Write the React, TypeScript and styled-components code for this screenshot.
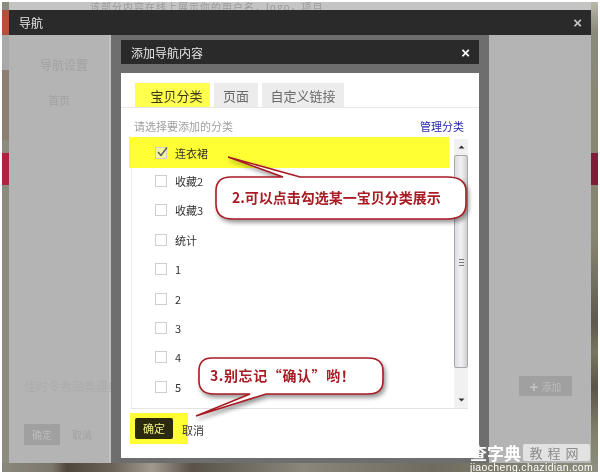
import React from "react";
import styled, { createGlobalStyle } from "styled-components";

const Global = createGlobalStyle`
  html, body { margin: 0; padding: 0; background: #fff; }
  body { font-family: "Noto Sans CJK SC", "Liberation Sans", sans-serif; }
`;

const Page = styled.div`
  width: 600px;
  height: 475px;
  padding: 2px 2px 3px 2px;
  box-sizing: border-box;
  overflow: hidden;
  background: #fff;
`;
const Backdrop = styled.div`
  position: relative;
  height: 100%;
  box-sizing: border-box;
  display: flex;
  flex-direction: column;
  padding: 8px 7px 9px 7px;
  overflow: hidden;
  filter: blur(0.35px);
  background: #c4c4c4;
`;
const BottomStrip = styled.div`
  position: absolute;
  left: 0;
  right: 0;
  bottom: 0;
  height: 9px;
  background: linear-gradient(
    to right,
    #8a877c 0,
    #7c776c 50px,
    #4f473c 65px,
    #6a6257 110px,
    #a09a8e 150px,
    #58524a 190px,
    #8a867a 300px,
    #6f6b5e 430px,
    #8f8f80 100%
  );
`;
const SideStrip = styled.div<{ $right?: boolean }>`
  position: absolute;
  top: 0;
  bottom: 0;
  width: 7px;
  ${(p) => (p.$right ? "right: 0;" : "left: 0;")}
  background: ${(p) =>
    p.$right
      ? "linear-gradient(to bottom, #b9b8aa 0, #8a8a78 30px, #85846f 240px, #5e5a4c 320px, #77765f 350px, #5a5648 385px, #80806a 430px, #8f8f7f 100%)"
      : "#8c8b80"};
`;
const TopNote = styled.div`
  position: absolute;
  top: 0;
  left: 88px;
  font-size: 10px;
  line-height: 9px;
  letter-spacing: 1px;
  color: #9a9a9a;
  white-space: nowrap;
`;
const SideBlock = styled.div<{ $top: number; $h: number; $right?: boolean; $color: string }>`
  position: absolute;
  top: ${(p) => p.$top}px;
  height: ${(p) => p.$h}px;
  width: 7px;
  ${(p) => (p.$right ? "right: 0;" : "left: 0;")}
  background: ${(p) => p.$color};
`;
const Dialog = styled.div`
  position: relative;
  flex: 1;
  display: flex;
  flex-direction: column;
  background: #b4b4b4;
`;
const TitleBar = styled.div<{ $h: number }>`
  height: ${(p) => p.$h}px;
  flex: none;
  display: flex;
  align-items: center;
  justify-content: space-between;
  padding: 0 9px 0 10px;
  background: #2a2a2a;
  color: #e6e6e6;
  font-size: 12px;
`;
const Close = styled.span<{ $bright?: boolean }>`
  color: ${(p) => (p.$bright ? "#fff" : "#c4c4c4")};
  font-family: "Liberation Sans", sans-serif;
  font-size: 15px;
  font-weight: 700;
  line-height: 1;
`;
const DialogBody = styled.div`
  flex: 1;
  display: flex;
  justify-content: space-between;
`;
const FadedLeft = styled.div`
  width: 102px;
  border-right: 2px solid #c0c0c0;
  display: flex;
  flex-direction: column;
  color: #a2a2a2;
  font-size: 12px;
  padding: 22px 0 18px 15px;
  box-sizing: border-box;
`;
const NavHeading = styled.div`
  font-size: 12px;
  line-height: 16px;
  padding-left: 16px;
`;
const NavItem = styled.div`
  font-size: 11px;
  line-height: 14px;
  margin-top: 20px;
  padding-left: 24px;
`;
const FadedHint = styled.div`
  margin-top: auto;
  font-size: 12px;
  line-height: 14px;
  white-space: nowrap;
  color: #acacac;
`;
const FadedActions = styled.div`
  margin-top: 31px;
  display: flex;
  align-items: center;
  gap: 12px;
  font-size: 10px;
`;
const FadedOk = styled.div`
  width: 36px;
  height: 21px;
  background: #a0a0a0;
  color: #bcbcbc;
  text-align: center;
  line-height: 21px;
`;
const FadedRight = styled.div`
  width: 102px;
  display: flex;
  flex-direction: column;
  align-items: flex-end;
  padding: 341px 19px 0 0;
  box-sizing: border-box;
`;
const AddButton = styled.div`
  width: 53px;
  height: 20px;
  background: #a0a0a0;
  color: #bdbdbd;
  font-size: 10px;
  display: flex;
  align-items: center;
  justify-content: center;
  gap: 3px;
  b {
    font-family: "Liberation Sans", sans-serif;
    font-size: 15px;
    color: #c4c4c4;
  }
`;
const ModalFrame = styled.div`
  position: absolute;
  left: 102px;
  top: 25px;
  width: 378px;
  height: 428px;
  box-sizing: border-box;
  padding: 5px 10px;
  background: #6e6e6e;
  display: flex;
  flex-direction: column;
`;
const ModalGap = styled.div`
  height: 9px;
  flex: none;
`;
const ModalBody = styled.div`
  position: relative;
  flex: 1;
  background: #fff;
  display: flex;
  flex-direction: column;
`;
const TabRow = styled.div`
  height: 24px;
  margin-top: 10px;
  display: flex;
  gap: 4px;
  padding-left: 14px;
  border-bottom: 1px solid #e8e8e8;
`;
const Tab = styled.div<{ $active?: boolean; $w: number }>`
  width: ${(p) => p.$w}px;
  padding-left: ${(p) => (p.$active ? 8 : 0)}px;
  box-sizing: border-box;
  text-align: center;
  font-size: 13px;
  line-height: 25px;
  color: ${(p) => (p.$active ? "#3a3a1a" : "#6a6a6a")};
  background: ${(p) => (p.$active ? "#ffff4d" : "#ececec")};
`;
const HintRow = styled.div`
  display: flex;
  justify-content: space-between;
  align-items: center;
  height: 30px;
  box-sizing: border-box;
  padding: 5px 15px 0 13px;
  font-size: 11px;
  color: #a0a0a0;
`;
const ManageLink = styled.a`
  color: #1f1fa8;
  font-size: 11px;
`;
const ListBox = styled.div`
  margin: 1px 11px 0 10px;
  height: 269px;
  display: flex;
  border-left: 1px solid #ececec;
  border-bottom: 1px solid #e4e4e4;
`;
const Rows = styled.div`
  flex: 1;
  margin: -2px 0 0 -3px;
  display: flex;
  flex-direction: column;
  min-width: 0;
`;
const Row = styled.div<{ $on?: boolean }>`
  height: ${(p) => (p.$on ? 31 : 29.4)}px;
  margin-bottom: ${(p) => (p.$on ? -1.6 : 0)}px;
  flex: none;
  display: flex;
  align-items: center;
  padding-left: 26px;
  margin-right: 5px;
  gap: 8px;
  font-size: 11px;
  color: #333;
  background: ${(p) => (p.$on ? "#ffff33" : "transparent")};
`;
const Check = styled.span<{ $on?: boolean }>`
  width: 10px;
  height: 10px;
  border: 1px solid #cfcfcf;
  background: ${(p) => (p.$on ? "#f4f4a0" : "#fff")};
  position: relative;
  flex: none;
  svg {
    position: absolute;
    left: 0;
    top: -3px;
  }
`;
const Scroll = styled.div`
  width: 14px;
  flex: none;
  display: flex;
  flex-direction: column;
  background: #f0f0f0;
`;
const ScrollBtn = styled.div<{ $grow?: boolean }>`
  height: 16px;
  ${(p) => (p.$grow ? "flex: 1;" : "")}
  display: flex;
  justify-content: center;
  align-items: ${(p) => (p.$grow ? "flex-end" : "center")};
  padding-bottom: ${(p) => (p.$grow ? "6px" : "0")};
  box-sizing: border-box;
  background: #f1f1f1;
`;
const Thumb = styled.div`
  height: 213px;
  flex: none;
  box-sizing: border-box;
  border: 1px solid #a8a8a8;
  border-radius: 2px;
  background: linear-gradient(to right, #dcdce4, #f2f2f2 50%, #cfcfcf);
  display: flex;
  align-items: center;
  justify-content: center;
  padding-top: 2px;
`;
const Grip = styled.div`
  width: 5px;
  height: 7px;
  background: repeating-linear-gradient(to bottom, #777 0, #777 1px, transparent 1px, transparent 3px);
`;
const Actions = styled.div`
  display: flex;
  align-items: center;
  height: 31px;
  margin-top: 4px;
  margin-left: 9px;
  font-size: 11px;
  color: #333;
`;
const OkMark = styled.div`
  width: 58px;
  height: 31px;
  background: #ffff33;
  display: flex;
  align-items: center;
  padding-left: 5px;
  box-sizing: border-box;
  margin-right: -6px;
`;
const OkButton = styled.div`
  width: 38px;
  height: 21px;
  border-radius: 2px;
  background: #2c2a0e;
  color: #f0f08a;
  text-align: center;
  line-height: 21px;
  font-size: 11px;
`;
const Cancel = styled.span`
  padding-top: 3px;
  position: relative;
`;
const Callout = styled.div<{ $x: number; $y: number; $w: number; $h: number }>`
  position: absolute;
  left: ${(p) => p.$x}px;
  top: ${(p) => p.$y}px;
  width: ${(p) => p.$w}px;
  height: ${(p) => p.$h}px;
  svg {
    position: absolute;
    left: 0;
    top: 0;
    overflow: visible;
  }
`;
const CalloutText = styled.div<{ $x: number; $y: number; $size: number; $track?: number }>`
  position: absolute;
  left: ${(p) => p.$x}px;
  top: ${(p) => p.$y}px;
  font-size: ${(p) => p.$size}px;
  letter-spacing: ${(p) => p.$track ?? 0}px;
  line-height: 20px;
  font-weight: 700;
  color: #a81c24;
  white-space: nowrap;
`;
const Watermark = styled.div`
  position: absolute;
  right: 8px;
  bottom: 0;
  width: 120px;
  display: flex;
  flex-direction: column;
  color: #fff;
`;
const WmTop = styled.div`
  display: flex;
  align-items: center;
  gap: 2px;
  height: 17px;
  margin-bottom: 1px;
`;
const WmBrand = styled.div`
  font-size: 17px;
  font-weight: 700;
  line-height: 17px;
  white-space: nowrap;
`;
const WmChip = styled.div`
  flex: 1;
  height: 17px;
  background: #e2e2e2;
  border-radius: 2px;
  color: #8a8a8a;
  font-size: 13px;
  line-height: 17px;
  text-align: center;
  letter-spacing: 5px;
  white-space: nowrap;
`;
const WmUrl = styled.div`
  font-family: "Liberation Sans", sans-serif;
  font-size: 10.5px;
  line-height: 10px;
  letter-spacing: 0.35px;
  white-space: nowrap;
`;

const Arrow = ({ up }: { up?: boolean }) => (
  <svg width="7" height="4" viewBox="0 0 7 4">
    <path d={up ? "M3.5 0.5 L6.5 3.5 H0.5 Z" : "M0.5 0.5 H6.5 L3.5 3.5 Z"} fill="#333" />
  </svg>
);

const categories = ["连衣裙", "收藏2", "收藏3", "统计", "1", "2", "3", "4", "5"];

function App() {
  return (
    <Page>
      <Global />
      <Backdrop>
        <SideStrip />
        <SideStrip $right />
        <BottomStrip />
        <TopNote>该部分内容在线上展示你的用户名，logo，项目</TopNote>
        <SideBlock $top={8} $h={25} $color="#b5503a" />
        <SideBlock $top={33} $h={35} $color="#a9a9a9" />
        <SideBlock $top={68} $h={70} $color="#8d7d72" />
        <SideBlock $top={151} $h={32} $color="#ad2440" />
        <SideBlock $top={151} $h={32} $right $color="#7a2036" />
        <Dialog>
          <TitleBar $h={25}>
            <span>导航</span>
            <Close>×</Close>
          </TitleBar>
          <DialogBody>
            <FadedLeft>
              <NavHeading>导航设置</NavHeading>
              <NavItem>首页</NavItem>
              <FadedHint>佳时令者品类盛典</FadedHint>
              <FadedActions>
                <FadedOk>确定</FadedOk>
                <span>取消</span>
              </FadedActions>
            </FadedLeft>
            <FadedRight>
              <AddButton>
                <b>+</b>添加
              </AddButton>
            </FadedRight>
          </DialogBody>
          <ModalFrame>
            <TitleBar $h={24}>
              <span>添加导航内容</span>
              <Close $bright>×</Close>
            </TitleBar>
            <ModalGap />
            <ModalBody>
              <TabRow>
                <Tab $active $w={75}>宝贝分类</Tab>
                <Tab $w={44}>页面</Tab>
                <Tab $w={82}>自定义链接</Tab>
              </TabRow>
              <HintRow>
                <span>请选择要添加的分类</span>
                <ManageLink>管理分类</ManageLink>
              </HintRow>
              <ListBox>
                <Rows>
                  {categories.map((name, i) => (
                    <Row key={name} $on={i === 0}>
                      <Check $on={i === 0}>
                        {i === 0 && (
                          <svg width="13" height="13" viewBox="0 0 13 13">
                            <path d="M2 7 L5 10.5 L11 2.5" fill="none" stroke="#555" strokeWidth="1.4" />
                          </svg>
                        )}
                      </Check>
                      <span>{name}</span>
                    </Row>
                  ))}
                </Rows>
                <Scroll>
                  <ScrollBtn><Arrow up /></ScrollBtn>
                  <Thumb><Grip /></Thumb>
                  <ScrollBtn $grow><Arrow /></ScrollBtn>
                </Scroll>
              </ListBox>
              <Actions>
                <OkMark><OkButton>确定</OkButton></OkMark>
                <Cancel>取消</Cancel>
              </Actions>
              <Callout $x={94} $y={103} $w={252} $h={44}>
                <svg width="252" height="44" viewBox="0 0 252 44">
                  <path
                    d="M16 1 H68 L13 -19 L85 1 H232 Q251 1 251 15 V28 Q251 43 232 43 H18 Q1 43 1 28 V15 Q1 1 16 1 Z"
                    fill="#fff"
                    stroke="#a81c24"
                    strokeWidth="1.6"
                    style={{ filter: "drop-shadow(2px 3px 2px rgba(0,0,0,.4))" }}
                  />
                </svg>
                <CalloutText $x={17} $y={11} $size={14}>2.可以点击勾选某一宝贝分类展示</CalloutText>
              </Callout>
              <Callout $x={77} $y={284} $w={186} $h={38}>
                <svg width="186" height="38" viewBox="0 0 186 38">
                  <path
                    d="M14 1 H170 Q185 1 185 14 V24 Q185 37 170 37 H68 L-2 59 L52 37 H16 Q1 37 1 24 V14 Q1 1 14 1 Z"
                    fill="#fff"
                    stroke="#a81c24"
                    strokeWidth="1.6"
                    style={{ filter: "drop-shadow(2px 3px 2px rgba(0,0,0,.4))" }}
                  />
                </svg>
                <CalloutText $x={12} $y={8} $size={14} $track={0.6}>3.别忘记“确认”哟！</CalloutText>
              </Callout>
            </ModalBody>
          </ModalFrame>
        </Dialog>
        <Watermark>
          <WmTop>
            <WmBrand>查字典</WmBrand>
            <WmChip>教程网</WmChip>
          </WmTop>
          <WmUrl>jiaocheng.chazidian.com</WmUrl>
        </Watermark>
      </Backdrop>
    </Page>
  );
}

export default App;
